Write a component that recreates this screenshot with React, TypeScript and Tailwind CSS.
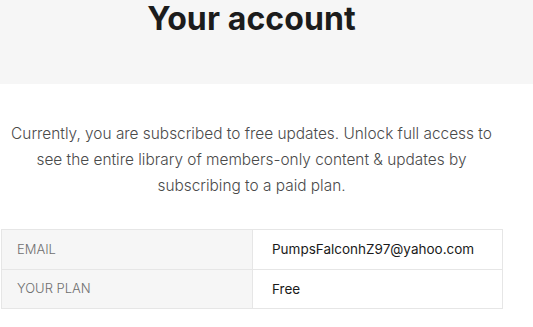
import React from 'react';

const rows = [
  { label: 'EMAIL', value: 'PumpsFalconhZ97@yahoo.com' },
  { label: 'YOUR PLAN', value: 'Free' },
];

export default function App() {
  return (
    <div className="w-[533px] h-[327px] bg-white overflow-hidden font-['Inter',sans-serif]">
      {/* Header band */}
      <div className="h-[84px] bg-[#f6f6f6] pt-[2px]">
        <h1 className="w-[503px] text-center text-[32px] leading-[34px] font-bold text-[#1c1c1c] tracking-[0.1px]">Your account</h1>
      </div>

      <div className="w-[503px]">
        {/* Intro */}
        <p className="mt-[37px] px-[4px] text-center text-[15.4px] leading-[26px] font-light text-[#4a4a4a]">
          Currently, you are subscribed to free updates. Unlock full access to see the entire library of members-only content &amp; updates by subscribing to a paid plan.
        </p>

        {/* Details table */}
        <div className="mt-[30px] ml-px w-[502px] border border-[#e6e6e6]">
          {rows.map((r, i) => (
            <div key={r.label} className={`flex h-[39px] ${i > 0 ? 'border-t border-[#e6e6e6]' : ''}`}>
              <div className="w-[251px] bg-[#f6f6f6] border-r border-[#e6e6e6] flex items-center pl-[15px] text-[13px] font-light text-[#6f6f6f]">
                {r.label}
              </div>
              <div className="flex-1 flex items-center pl-[19px] text-[13.5px] font-normal text-[#1a1a1a]">
                {r.value}
              </div>
            </div>
          ))}
        </div>
      </div>
    </div>
  );
}
